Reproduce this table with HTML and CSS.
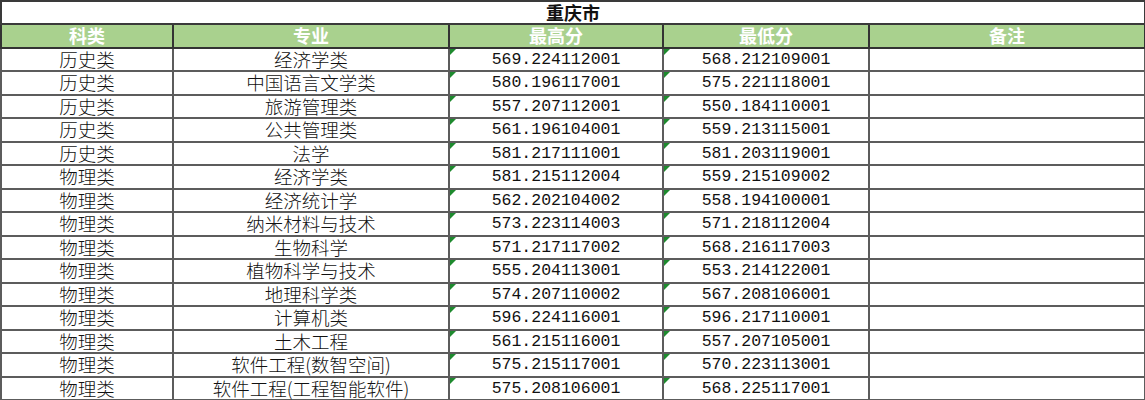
FILE: index.html
```html
<!DOCTYPE html>
<html lang="zh">
<head>
<meta charset="utf-8">
<link rel="stylesheet" href="styles.css">
</head>
<body>
<table class="sheet">
  <colgroup>
    <col class="c1"><col class="c2"><col class="c3"><col class="c4"><col class="c5">
  </colgroup>
  <tr class="title"><td colspan="5">重庆市</td></tr>
  <tr class="head"><th>科类</th><th>专业</th><th>最高分</th><th>最低分</th><th>备注</th></tr>
  <tr><td>历史类</td><td>经济学类</td><td class="num">569.224112001</td><td class="num">568.212109001</td><td></td></tr>
  <tr><td>历史类</td><td>中国语言文学类</td><td class="num">580.196117001</td><td class="num">575.221118001</td><td></td></tr>
  <tr><td>历史类</td><td>旅游管理类</td><td class="num">557.207112001</td><td class="num">550.184110001</td><td></td></tr>
  <tr><td>历史类</td><td>公共管理类</td><td class="num">561.196104001</td><td class="num">559.213115001</td><td></td></tr>
  <tr><td>历史类</td><td>法学</td><td class="num">581.217111001</td><td class="num">581.203119001</td><td></td></tr>
  <tr><td>物理类</td><td>经济学类</td><td class="num">581.215112004</td><td class="num">559.215109002</td><td></td></tr>
  <tr><td>物理类</td><td>经济统计学</td><td class="num">562.202104002</td><td class="num">558.194100001</td><td></td></tr>
  <tr><td>物理类</td><td>纳米材料与技术</td><td class="num">573.223114003</td><td class="num">571.218112004</td><td></td></tr>
  <tr><td>物理类</td><td>生物科学</td><td class="num">571.217117002</td><td class="num">568.216117003</td><td></td></tr>
  <tr><td>物理类</td><td>植物科学与技术</td><td class="num">555.204113001</td><td class="num">553.214122001</td><td></td></tr>
  <tr><td>物理类</td><td>地理科学类</td><td class="num">574.207110002</td><td class="num">567.208106001</td><td></td></tr>
  <tr><td>物理类</td><td>计算机类</td><td class="num">596.224116001</td><td class="num">596.217110001</td><td></td></tr>
  <tr><td>物理类</td><td>土木工程</td><td class="num">561.215116001</td><td class="num">557.207105001</td><td></td></tr>
  <tr><td>物理类</td><td>软件工程(数智空间)</td><td class="num">575.215117001</td><td class="num">570.223113001</td><td></td></tr>
  <tr><td>物理类</td><td>软件工程(工程智能软件)</td><td class="num">575.208106001</td><td class="num">568.225117001</td><td></td></tr>
</table>
</body>
</html>
```
FILE: styles.css
```css
html, body {
  margin: 0;
  padding: 0;
  background: #ffffff;
}

.sheet {
  border-collapse: collapse;
  table-layout: fixed;
  width: 1144px;
  font-family: "Noto Sans CJK SC", "Noto Sans", sans-serif;
  font-size: 18.5px;
  color: #111;
}

.c1 { width: 172px; }
.c2 { width: 276px; }
.c3 { width: 214px; }
.c4 { width: 206px; }
.c5 { width: 276px; }

.sheet td,
.sheet th {
  border: 2px solid #5c5c5c;
  padding: 0;
  height: 21.5px;
  line-height: 21.5px;
  text-align: center;
  vertical-align: bottom;
  white-space: nowrap;
  font-weight: 300;
}

.title td {
  height: 21px;
  line-height: 21px;
  font-weight: 700;
  font-size: 18px;
  border-color: #3a3a3a;
}

.head th {
  background: #a9d18e;
  color: #ffffff;
  font-weight: 700;
  font-size: 18px;
  border-color: #333333;
}

.sheet td.num {
  position: relative;
  font-family: "Liberation Mono", monospace;
  font-weight: 400;
  font-size: 16.5px;
  color: #111;
}

.sheet td.num::before {
  content: "";
  position: absolute;
  left: 0;
  top: 0;
  width: 0;
  height: 0;
  border-top: 6px solid #1e8a2e;
  border-right: 6px solid transparent;
}
```
